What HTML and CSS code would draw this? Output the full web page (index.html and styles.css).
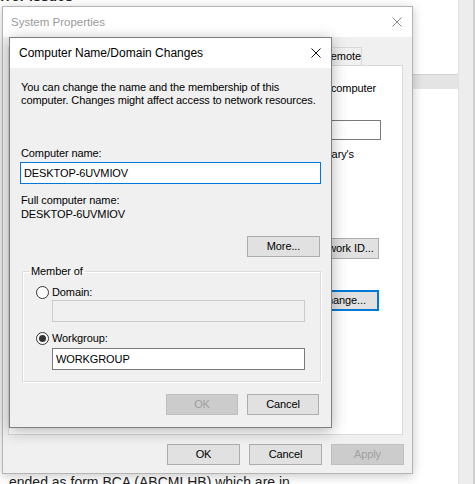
FILE: index.html
```html
<!DOCTYPE html>
<html>
<head>
<meta charset="utf-8">
<link rel="stylesheet" href="styles.css">
</head>
<body>
<div class="page">
  <div class="page-main">
    <div class="page-top"><span class="page-top-text">Error issues</span></div>
    <div class="page-band"></div>
    <div class="page-bottom">ended as form BCA (ABCMLHB) which are in</div>
  </div>
  <div class="page-scroll"></div>
</div>

<div class="win sp">
  <div class="titlebar">
    <span class="title">System Properties</span>
    <svg class="close" width="10" height="10" viewBox="0 0 10 10"><path d="M0.5 0.5L9.5 9.5M9.5 0.5L0.5 9.5" stroke="#8a8a8a" stroke-width="1" fill="none"/></svg>
  </div>
  <div class="tabs">
    <div class="tab sel w1"></div>
    <div class="tab w2"></div>
    <div class="tab w3"></div>
    <div class="tab w4"></div>
    <div class="tab w5">Remote</div>
  </div>
  <div class="panel">
    <p class="pline p1">computer</p>
    <div class="pinput"></div>
    <p class="pline p2">Mary's</p>
    <div class="btn pbtn b1">Network ID...</div>
    <div class="btn pbtn b2 default">Change...</div>
  </div>
  <div class="btnrow">
    <div class="btn">OK</div>
    <div class="btn">Cancel</div>
    <div class="btn disabled">Apply</div>
  </div>
</div>

<div class="win dlg">
  <div class="titlebar">
    <span class="title">Computer Name/Domain Changes</span>
    <svg class="close" width="10" height="10" viewBox="0 0 10 10"><path d="M0.5 0.5L9.5 9.5M9.5 0.5L0.5 9.5" stroke="#111" stroke-width="1" fill="none"/></svg>
  </div>
  <div class="dlg-body">
    <p class="intro">You can change the name and the membership of this<br>computer. Changes might affect access to network resources.</p>
    <div class="lbl first">Computer name:</div>
    <div class="input focus">DESKTOP-6UVMIOV</div>
    <div class="lbl second">Full computer name:</div>
    <div class="value">DESKTOP-6UVMIOV</div>
    <div class="row-end more-row"><div class="btn">More...</div></div>
    <fieldset class="group">
      <legend>Member of</legend>
      <div class="radio-row r1"><span class="radio"></span><span>Domain:</span></div>
      <div class="input ginput disabled"></div>
      <div class="radio-row r2"><span class="radio checked"></span><span>Workgroup:</span></div>
      <div class="input ginput dark">WORKGROUP</div>
    </fieldset>
    <div class="row-end dlg-btns">
      <div class="btn disabled">OK</div>
      <div class="btn">Cancel</div>
    </div>
  </div>
</div>
</body>
</html>
```

FILE: styles.css
```css
* { box-sizing: border-box; }
html, body { margin: 0; padding: 0; }
body {
  width: 475px;
  height: 484px;
  overflow: hidden;
  position: relative;
  background: #fff;
  font-family: "Liberation Sans", Arial, sans-serif;
  font-size: 11px;
  letter-spacing: -0.1px;
  color: #000;
}
p { margin: 0; }

/* background page */
.page { display: flex; height: 484px; }
.page-main { flex: 1; display: flex; flex-direction: column; }
.page-top { height: 6px; overflow: hidden; }
.page-top-text {
  display: block;
  margin-top: -12px;
  margin-left: -9px;
  font-size: 14px;
  line-height: 16px;
  font-weight: bold;
  letter-spacing: 0;
  color: #222;
}
.page-band {
  margin-top: 68px;
  margin-left: 412px;
  height: 15px;
  background: #e4e4e4;
  border-top: 1px solid #d4d4d4;
}
.page-bottom {
  margin-top: auto;
  height: 9px;
  overflow: hidden;
  padding-left: 9px;
  font-size: 14px;
  line-height: 15px;
  letter-spacing: 0;
  color: #222;
}
.page-scroll {
  width: 17px;
  background: #ededed;
  border-left: 1px solid #e2e2e2;
  border-right: 2px solid #cfcfcf;
}

/* windows */
.win {
  position: absolute;
  display: flex;
  flex-direction: column;
  background: #f0f0f0;
}
.titlebar {
  height: 30px;
  flex: none;
  background: #fff;
  display: flex;
  align-items: center;
  justify-content: space-between;
  letter-spacing: 0;
}
.close { display: block; }

.sp {
  left: 2px;
  top: 6px;
  width: 411px;
  height: 468px;
  border: 1px solid #b4b4b4;
  box-shadow: 0 2px 10px rgba(0, 0, 0, 0.22);
}
.sp .titlebar { padding: 0 10px 0 8px; }
.sp .title { color: #9a9a9a; font-size: 11.5px; }

.tabs {
  display: flex;
  margin-top: 10px;
  padding-left: 5px;
  height: 18px;
  flex: none;
}
.tab {
  height: 18px;
  border: 1px solid #d9d9d9;
  border-bottom: none;
  margin-right: -1px;
  padding: 1px 0 0 6px;
  background: #f0f0f0;
  line-height: 15px;
  white-space: nowrap;
  overflow: hidden;
}
.tab.sel { background: #fff; }
.w1 { width: 88px; }
.w2 { width: 58px; }
.w3 { width: 60px; }
.w4 { width: 100px; }
.w5 { width: 52px; margin-right: 0; padding-left: 12px; }

.panel {
  margin: 0 9px 0 5px;
  height: 370px;
  background: #fff;
  border: 1px solid #dadada;
  display: flex;
  flex-direction: column;
  align-items: flex-end;
  padding-top: 15px;
}
.pline { line-height: 14px; white-space: nowrap; }
.p1 { margin-right: 26px; }
.pinput {
  margin-top: 25px;
  margin-right: 21px;
  width: 250px;
  height: 20px;
  border: 1px solid #7a7a7a;
  background: #fff;
}
.p2 { margin-top: 7px; margin-right: 48px; }
.pbtn { width: 88px; margin-right: 23px; }
.b1 { margin-top: 77px; }
.b2 { margin-top: 31px; }
.btn.default { border: 2px solid #0078d7; line-height: 17px; }

.btn {
  width: 73px;
  height: 21px;
  background: #e1e1e1;
  border: 1px solid #adadad;
  text-align: center;
  line-height: 19px;
  white-space: nowrap;
  overflow: hidden;
}
.btn.disabled {
  background: #cccccc;
  border-color: #bfbfbf;
  color: #a0a0a0;
}
.btnrow {
  display: flex;
  justify-content: flex-end;
  gap: 9px;
  margin-top: 9px;
  padding-right: 8px;
}

/* dialog */
.dlg {
  left: 9px;
  top: 37px;
  width: 323px;
  height: 391px;
  border: 1px solid #7f7f7f;
  box-shadow: 0 3px 14px rgba(0, 0, 0, 0.3);
}
.dlg .titlebar { padding: 0 10px 0 9px; height: 30px; }
.dlg .title { font-size: 12px; }
.dlg-body {
  padding: 13px 10px 0 11px;
  display: flex;
  flex-direction: column;
}
.intro { line-height: 13px; white-space: nowrap; }
.lbl { line-height: 14px; }
.lbl.first { margin-top: 39px; }
.lbl.second { margin-top: 9px; }
.value { line-height: 14px; }
.input {
  height: 22px;
  border: 1px solid #7a7a7a;
  background: #fff;
  padding-left: 3px;
  line-height: 20px;
  white-space: nowrap;
}
.input.focus { margin-top: 2px; border-color: #0078d7; width: 301px; margin-left: -1px; }
.row-end { display: flex; justify-content: flex-end; gap: 9px; }
.more-row { margin-top: 15px; padding-right: 1px; }

.group {
  margin: 7px 0 0 1px;
  padding: 0 0 11px 0;
  width: 299px;
  border: 1px solid #dcdcdc;
  box-shadow: inset 1px 1px 0 #fff, 1px 1px 0 #fff;
  min-width: 0;
}
.group legend {
  margin-left: 6px;
  padding: 0 2px;
  line-height: 14px;
}
.radio-row {
  display: flex;
  align-items: center;
  height: 14px;
  padding-left: 13px;
  line-height: 14px;
}
.r1 { margin-top: 7px; }
.r2 { margin-top: 9px; }
.radio {
  width: 13px;
  height: 13px;
  border: 1px solid #333;
  border-radius: 50%;
  background: #fff;
  margin-right: 3px;
  display: flex;
  align-items: center;
  justify-content: center;
  flex: none;
}
.radio.checked::after {
  content: "";
  width: 7px;
  height: 7px;
  border-radius: 50%;
  background: #333;
}
.ginput { margin: 0 15px 0 29px; }
.ginput.disabled { margin-top: 1px; border-color: #cccccc; background: #f0f0f0; }
.ginput.dark { margin-top: 3px; }
.dlg-btns { margin-top: 12px; padding-right: 2px; }
.dlg-btns .btn { width: 72px; }
```
